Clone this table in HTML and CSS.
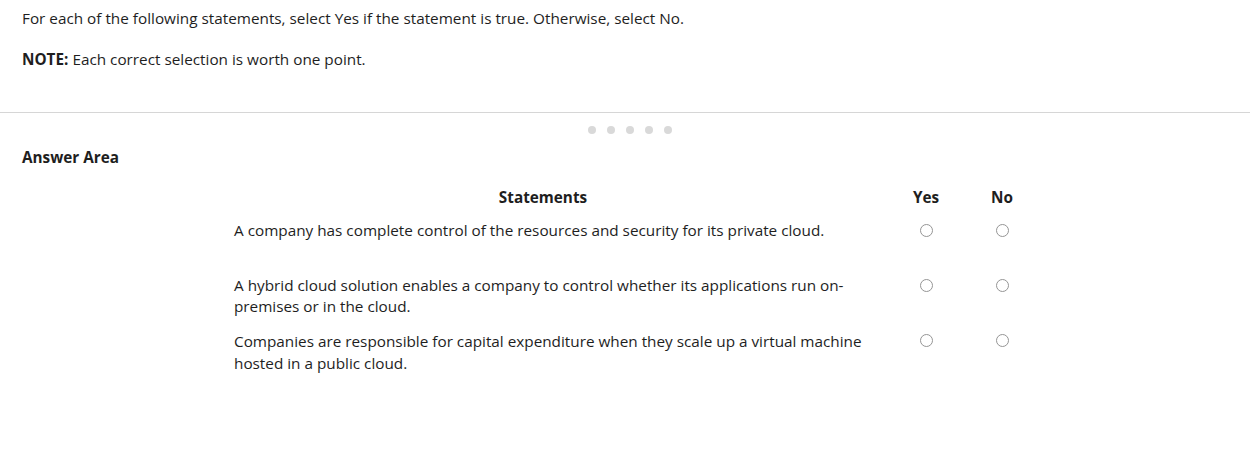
FILE: index.html
```html
<!DOCTYPE html>
<html>
<head>
<meta charset="utf-8">
<link rel="stylesheet" href="styles.css">
</head>
<body>
<div class="question">
  <p class="line">For each of the following statements, select Yes if the statement is true. Otherwise, select No.</p>
  <p class="line note"><b>NOTE:</b> Each correct selection is worth one point.</p>
</div>
<hr class="divider">
<div class="dots"><span></span><span></span><span></span><span></span><span></span></div>
<div class="answer">
  <div class="answer-title">Answer Area</div>
  <table class="grid">
    <colgroup>
      <col class="c-stmt">
      <col class="c-opt">
      <col class="c-opt">
    </colgroup>
    <thead>
      <tr>
        <th class="stmt-h">Statements</th>
        <th class="opt">Yes</th>
        <th class="opt">No</th>
      </tr>
    </thead>
    <tbody>
      <tr>
        <td class="stmt">A company has complete control of the resources and security for its private cloud.</td>
        <td class="opt"><span class="radio"></span></td>
        <td class="opt"><span class="radio"></span></td>
      </tr>
      <tr>
        <td class="stmt">A hybrid cloud solution enables a company to control whether its applications run on-premises or in the cloud.</td>
        <td class="opt"><span class="radio"></span></td>
        <td class="opt"><span class="radio"></span></td>
      </tr>
      <tr>
        <td class="stmt">Companies are responsible for capital expenditure when they scale up a virtual machine hosted in a public cloud.</td>
        <td class="opt"><span class="radio"></span></td>
        <td class="opt"><span class="radio"></span></td>
      </tr>
    </tbody>
  </table>
</div>
</body>
</html>
```

FILE: styles.css
```css
html, body {
  margin: 0;
  padding: 0;
  background: #fff;
}
body {
  font-family: "Open Sans", "Noto Sans", sans-serif;
  font-size: 15.3px;
  color: #1e1e1e;
}
.question {
  padding: 8px 22px 0 22px;
}
.line {
  margin: 0;
  line-height: 21px;
}
.note {
  margin-top: 20px;
}
.note b {
  font-weight: 700;
}
.divider {
  border: 0;
  border-top: 1px solid #d6d6d6;
  margin: 42px 0 0 0;
}
.dots {
  display: flex;
  justify-content: center;
  gap: 11px;
  padding-top: 13px;
  padding-left: 10px;
}
.dots span {
  width: 8px;
  height: 8px;
  border-radius: 50%;
  background: #d9d9d9;
}
.answer {
  padding: 13px 22px 0 22px;
}
.answer-title {
  font-weight: 700;
  line-height: 21px;
}
.grid {
  border-collapse: collapse;
  table-layout: fixed;
  width: 806px;
  margin-left: 212px;
  margin-top: 19px;
}
.c-stmt {
  width: 654px;
}
.c-opt {
  width: 76px;
}
.grid th {
  font-weight: 700;
  line-height: 21px;
  padding: 0 0 12px 0;
}
.grid th.stmt-h {
  text-align: center;
  padding-right: 36px;
}
.grid td {
  vertical-align: top;
  padding: 0;
  height: 55px;
  line-height: 21px;
}
.grid td.stmt {
  padding-right: 24px;
}
.grid tr:last-child td.stmt {
  line-height: 22px;
}
.opt {
  text-align: center;
}
.radio {
  display: inline-block;
  width: 11px;
  height: 11px;
  border: 1.5px solid #959595;
  border-radius: 50%;
  margin-top: 3.5px;
  vertical-align: top;
}
```
